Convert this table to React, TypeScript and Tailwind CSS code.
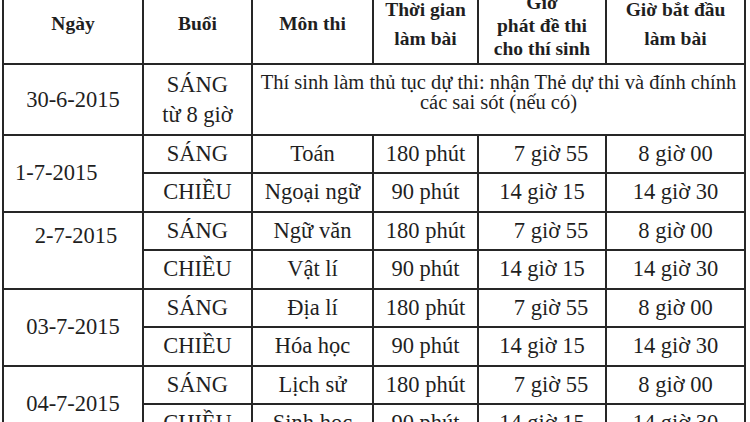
const serif = { fontFamily: '"Liberation Serif", "Times New Roman", serif' }

type Row = {
  date?: string
  dateClass?: string
  session: string
  subject: string
  duration: string
  handout: string
  start: string
}

const rows: Row[] = [
  { date: '1-7-2015', dateClass: 'justify-start pl-[11px]', session: 'SÁNG', subject: 'Toán', duration: '180 phút', handout: '7 giờ 55', start: '8 giờ 00' },
  { session: 'CHIỀU', subject: 'Ngoại ngữ', duration: '90 phút', handout: '14 giờ 15', start: '14 giờ 30' },
  { date: '2-7-2015', dateClass: 'justify-center pb-[29px] pl-[6px]', session: 'SÁNG', subject: 'Ngữ văn', duration: '180 phút', handout: '7 giờ 55', start: '8 giờ 00' },
  { session: 'CHIỀU', subject: 'Vật lí', duration: '90 phút', handout: '14 giờ 15', start: '14 giờ 30' },
  { date: '03-7-2015', dateClass: 'justify-center', session: 'SÁNG', subject: 'Địa lí', duration: '180 phút', handout: '7 giờ 55', start: '8 giờ 00' },
  { session: 'CHIỀU', subject: 'Hóa học', duration: '90 phút', handout: '14 giờ 15', start: '14 giờ 30' },
  { date: '04-7-2015', dateClass: 'justify-center', session: 'SÁNG', subject: 'Lịch sử', duration: '180 phút', handout: '7 giờ 55', start: '8 giờ 00' },
  { session: 'CHIỀU', subject: 'Sinh học', duration: '90 phút', handout: '14 giờ 15', start: '14 giờ 30' },
]

const cell = 'flex items-center justify-center bg-white text-center'

export default function App() {
  return (
    <div className="h-[422px] w-[750px] overflow-hidden bg-white text-[#1f1f1f]" style={serif}>
      <div className="-mt-[17px] ml-[2px] grid w-[744px] grid-cols-[138px_107px_119px_103px_126px_137px] grid-rows-[78px_69px_36px_37px_36px_37px_36px_37px_36px_37px] gap-[2px] bg-[#262626] p-[2px]">
        {/* header */}
        <div className={`${cell} text-[19.5px] font-bold`}>Ngày</div>
        <div className={`${cell} text-[19.5px] font-bold`}>Buổi</div>
        <div className={`${cell} text-[19.5px] font-bold`}>Môn thi</div>
        <div className={`${cell} text-[19.5px] leading-[29px] font-bold`}>
          Thời gian
          <br />
          làm bài
        </div>
        <div className={`${cell} pt-[2px] text-[19.5px] leading-[23px] font-bold`}>
          Giờ
          <br />
          phát đề thi
          <br />
          cho thí sinh
        </div>
        <div className={`${cell} text-[19.5px] leading-[29px] font-bold`}>
          Giờ bắt đầu
          <br />
          làm bài
        </div>

        {/* registration day */}
        <div className={`${cell} text-[22.5px]`}>30-6-2015</div>
        <div className={`${cell} text-[22.5px] leading-[30px]`}>
          SÁNG
          <br />
          từ 8 giờ
        </div>
        <div className="col-span-4 flex items-start justify-center bg-white pt-[7px] text-center text-[20.5px] leading-[20px]">
          Thí sinh làm thủ tục dự thi: nhận Thẻ dự thi và đính chính
          <br />
          các sai sót (nếu có)
        </div>

        {rows.map((r, i) => (
          <Fragment key={i} row={r} />
        ))}
      </div>
    </div>
  )
}

function Fragment({ row }: { row: Row }) {
  const t = 'text-[22.5px] leading-none'
  const shifted = row.handout === '7 giờ 55' ? 'pl-[18px]' : ''
  return (
    <>
      {row.date && (
        <div className={`row-span-2 flex items-center bg-white ${t} ${row.dateClass}`}>
          {row.date}
        </div>
      )}
      <div className={`${cell} ${t}`}>{row.session}</div>
      <div className={`${cell} ${t}`}>{row.subject}</div>
      <div className={`${cell} ${t}`}>{row.duration}</div>
      <div className={`${cell} ${t} ${shifted}`}>{row.handout}</div>
      <div className={`${cell} ${t}`}>{row.start}</div>
    </>
  )
}
